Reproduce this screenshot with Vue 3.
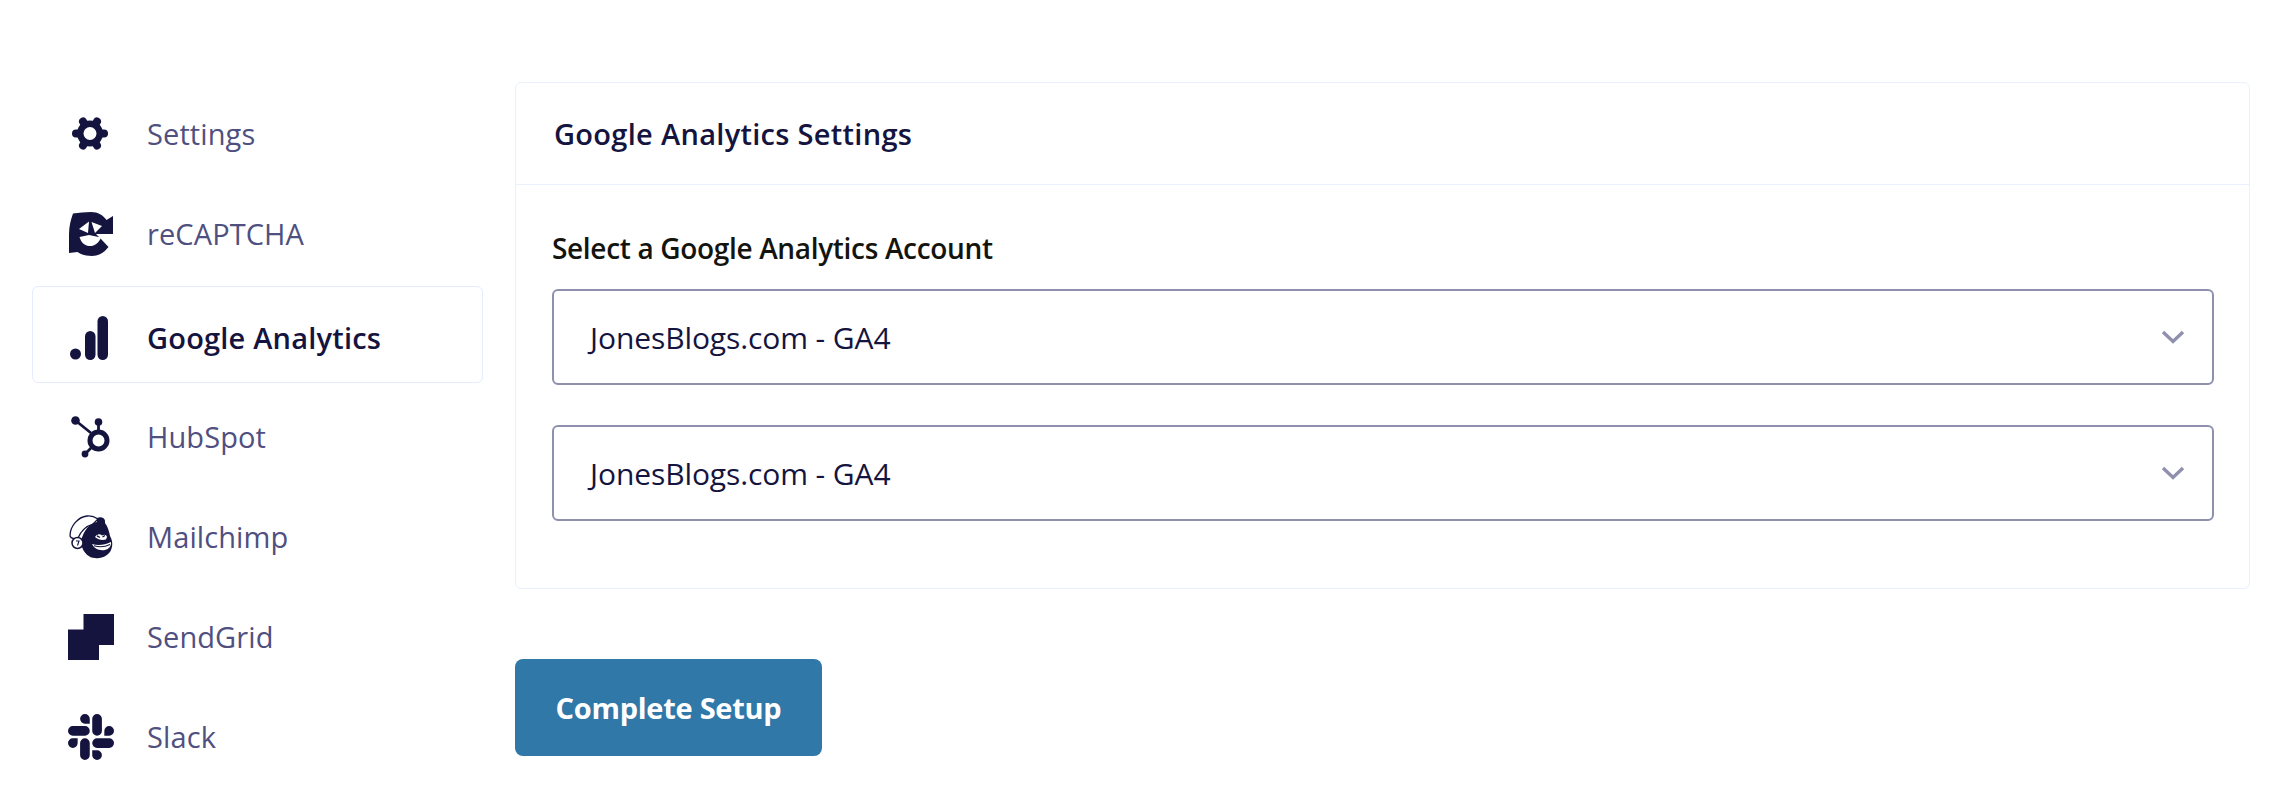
<script setup>
const navItems = [
  { key: 'settings', label: 'Settings' },
  { key: 'recaptcha', label: 'reCAPTCHA' },
  { key: 'analytics', label: 'Google Analytics', active: true },
  { key: 'hubspot', label: 'HubSpot' },
  { key: 'mailchimp', label: 'Mailchimp' },
  { key: 'sendgrid', label: 'SendGrid' },
  { key: 'slack', label: 'Slack' },
]

const accounts = ['JonesBlogs.com - GA4', 'JonesBlogs.com - GA4']
</script>

<template>
  <div class="page">
    <nav class="sidebar">
      <a
        v-for="item in navItems"
        :key="item.key"
        class="nav-item"
        :class="{ 'nav-item--active': item.active }"
      >
        <span class="nav-icon">
          <svg v-if="item.key === 'settings'" width="38" height="33" viewBox="0 0 38 33">
            <circle cx="18" cy="16.500" r="13" />
            <g stroke="#14143f" stroke-width="8" stroke-linecap="round">
              <path d="M4 16.500H32" />
              <path d="M11 4.500L25 28.500" />
              <path d="M25 4.500L11 28.500" />
            </g>
            <circle cx="18" cy="16.500" r="6.500" fill="#fff" />
          </svg>

          <svg v-else-if="item.key === 'recaptcha'" width="45" height="44" viewBox="0 0 45 44">
            <path d="M4 1.500C10 0.500 16 0 22 0C29 0 34 3 37.500 8L44 4V22H27L32 27L39.500 35C35 41 29 44 23 44C17 44 12 42.500 8.500 40L0 41V22C0 14 2 7 4 1.500Z" />
            <path d="M10 17L20 9.500L19 21Z" fill="#fff" />
            <path d="M22.500 10L33 14L26 21Z" fill="#fff" />
            <path d="M10.500 25L20 23L32 25.500C30 31 25 34.500 20 34C15 33.500 12 30 10.500 25Z" fill="#fff" />
          </svg>

          <svg v-else-if="item.key === 'analytics'" width="42" height="44" viewBox="0 0 42 44">
            <circle cx="5.500" cy="38" r="5.500" />
            <rect x="15" y="15" width="10.500" height="29" rx="5.250" />
            <rect x="27.500" y="0" width="10.500" height="44" rx="5.250" />
          </svg>

          <svg v-else-if="item.key === 'hubspot'" width="40" height="42" viewBox="0 0 40 42">
            <circle cx="4.500" cy="4.500" r="4.300" />
            <circle cx="27.500" cy="6" r="3.800" />
            <circle cx="14" cy="38" r="3.400" />
            <path d="M4.500 4.500L20 17M27.500 6V16M14 38L21 31" stroke="#14143f" stroke-width="2.800" fill="none" />
            <circle cx="27.500" cy="24.500" r="8.500" stroke="#14143f" stroke-width="5" fill="none" />
          </svg>

          <svg v-else-if="item.key === 'mailchimp'" width="44" height="44" viewBox="0 0 44 44">
            <path d="M1 21C1 11 9 2 18 1C22 0.500 26 2 29 4L24 9C17 11 12 16 9 23C6 24 2 24 1 21Z" fill="#fff" stroke="#14143f" stroke-width="1.300" />
            <path d="M14 20C17 13 22 8 28 7L28 3C32 1 37 3 36 8C39 12 40 16 41 21C44 26 44 32 41 37C37 42 31 44 26 43C20 43 15 38 13 32C11 28 12 24 14 20Z" />
            <circle cx="8.500" cy="28" r="5.500" fill="#fff" stroke="#14143f" stroke-width="1.500" />
            <path d="M7 26H10L8.500 30.500" fill="none" stroke="#14143f" stroke-width="1.100" />
            <path d="M26 22C28 19 31 18.500 33 20.500C35 19 37.500 19.500 38 22L37 24.500C33 25.500 29 24.500 26 22Z" fill="#fff" />
            <path d="M28 20.800L31 22.500M33.500 22L36 20.500" stroke="#14143f" stroke-width="1.400" fill="none" />
            <path d="M23 29C29 31 36 30 42 27C42.500 31 40 34 36 35C30 36 25 33.500 23 29Z" fill="#fff" />
            <path d="M25 30.800C31 32.500 37 31.500 41 29.500" fill="none" stroke="#14143f" stroke-width="1.100" />
          </svg>

          <svg v-else-if="item.key === 'sendgrid'" width="46" height="46" viewBox="0 0 46 46">
            <path d="M15.500 0H46V31H31V46H0V15.500H15.500Z" />
          </svg>

          <svg v-else width="46" height="46" viewBox="0 0 24 24">
            <path d="M5.042 15.165a2.528 2.528 0 0 1-2.52 2.523A2.528 2.528 0 0 1 0 15.165a2.527 2.527 0 0 1 2.522-2.52h2.52v2.52zM6.313 15.165a2.527 2.527 0 0 1 2.521-2.52 2.527 2.527 0 0 1 2.521 2.52v6.313A2.528 2.528 0 0 1 8.834 24a2.528 2.528 0 0 1-2.521-2.522v-6.313zM8.834 5.042a2.528 2.528 0 0 1-2.521-2.52A2.528 2.528 0 0 1 8.834 0a2.528 2.528 0 0 1 2.521 2.522v2.52H8.834zM8.834 6.313a2.528 2.528 0 0 1 2.521 2.521 2.528 2.528 0 0 1-2.521 2.521H2.522A2.528 2.528 0 0 1 0 8.834a2.528 2.528 0 0 1 2.522-2.521h6.312zM18.956 8.834a2.528 2.528 0 0 1 2.522-2.521A2.528 2.528 0 0 1 24 8.834a2.528 2.528 0 0 1-2.522 2.521h-2.522V8.834zM17.688 8.834a2.528 2.528 0 0 1-2.523 2.521 2.527 2.527 0 0 1-2.52-2.521V2.522A2.527 2.527 0 0 1 15.165 0a2.528 2.528 0 0 1 2.523 2.522v6.312zM15.165 18.956a2.528 2.528 0 0 1 2.523 2.522A2.528 2.528 0 0 1 15.165 24a2.527 2.527 0 0 1-2.52-2.522v-2.522h2.52zM15.165 17.688a2.527 2.527 0 0 1-2.52-2.523 2.526 2.526 0 0 1 2.52-2.52h6.313A2.527 2.527 0 0 1 24 15.165a2.528 2.528 0 0 1-2.522 2.523h-6.313z" />
          </svg>
        </span>
        <span class="nav-label">{{ item.label }}</span>
      </a>
    </nav>

    <main class="content">
      <section class="panel">
        <h2 class="panel__title">Google Analytics Settings</h2>
        <div class="panel__body">
          <label class="field-label">Select a Google Analytics Account</label>
          <div v-for="(account, i) in accounts" :key="i" class="select">
            <span>{{ account }}</span>
            <svg class="select__chevron" width="24" height="16" viewBox="0 0 24 16">
              <path d="M2 3L12 12.500L22 3" fill="none" stroke="#8f8fae" stroke-width="3.400" />
            </svg>
          </div>
        </div>
      </section>
      <button class="submit">Complete Setup</button>
    </main>
  </div>
</template>

<style scoped>
.page {
  display: flex;
  align-items: flex-start;
  gap: 32px;
  width: 2294px;
  height: 799px;
  padding: 82px 44px 0 32px;
  box-sizing: border-box;
  overflow: hidden;
  background: #fff;
  font-family: "Open Sans", "Noto Sans", sans-serif;
}

.sidebar {
  display: flex;
  flex-direction: column;
  flex: 0 0 451px;
  gap: 3px;
  padding-top: 3px;
}

.nav-item {
  display: flex;
  align-items: center;
  height: 97px;
  box-sizing: border-box;
  padding-left: 35px;
  border: 1px solid transparent;
  border-radius: 6px;
  color: #505080;
  font-size: 29px;
  letter-spacing: 0.100px;
}

.nav-item--active {
  margin-top: 1px;
  margin-bottom: 2px;
  padding-top: 6px;
  border-color: #e4ecfd;
  color: #14143f;
  font-weight: 600;
  letter-spacing: 0.200px;
}

.nav-icon {
  display: flex;
  flex: 0 0 46px;
  align-items: center;
  justify-content: center;
  margin-right: 33px;
  fill: #14143f;
}

.content {
  flex: 1;
  min-width: 0;
}

.panel {
  height: 507px;
  box-sizing: border-box;
  border: 1px solid #eaf0fd;
  border-radius: 6px;
}

.panel__title {
  height: 102px;
  margin: 0;
  padding: 0 0 0 38px;
  box-sizing: border-box;
  border-bottom: 1px solid #eaf0fd;
  color: #14143f;
  font-size: 29px;
  font-weight: 600;
  letter-spacing: 0.300px;
  line-height: 102px;
}

.panel__body {
  padding: 44px 35px 0 36px;
}

.field-label {
  display: block;
  margin-bottom: 22px;
  color: #14140f;
  font-size: 28px;
  font-weight: 600;
  letter-spacing: -0.330px;
  line-height: 38px;
}

.select {
  display: flex;
  align-items: center;
  justify-content: space-between;
  height: 96px;
  box-sizing: border-box;
  margin-bottom: 40px;
  padding: 0 27px 0 36px;
  border: 2px solid #8f8fae;
  border-radius: 6px;
  color: #14143f;
  font-size: 30px;
  letter-spacing: -0.100px;
}

.submit {
  display: block;
  width: 307px;
  height: 97px;
  margin-top: 70px;
  padding: 0;
  border: 0;
  border-radius: 8px;
  background: #2f78a8;
  color: #fff;
  font-family: inherit;
  font-size: 29px;
  font-weight: 700;
  letter-spacing: -0.270px;
}
</style>
